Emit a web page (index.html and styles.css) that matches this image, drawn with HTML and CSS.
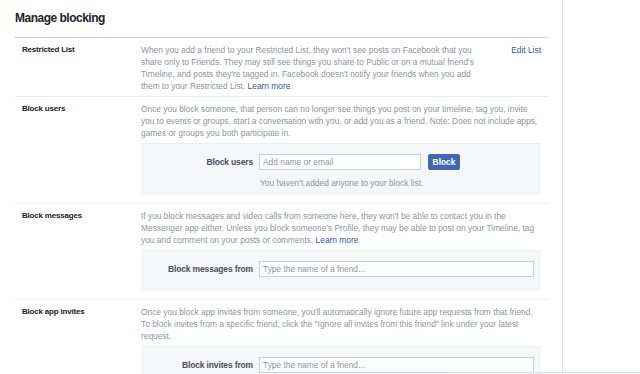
FILE: index.html
```html
<!DOCTYPE html>
<html>
<head>
<meta charset="utf-8">
<link rel="stylesheet" href="styles.css">
</head>
<body>
<div class="page">
  <main class="content">
    <h1 class="title">Manage blocking</h1>
    <div class="rows">
      <section class="row row-first">
        <div class="label">Restricted List</div>
        <div class="body body-narrow">
          <p class="desc">When you add a friend to your Restricted List, they won't see posts on Facebook that you share only to Friends. They may still see things you share to Public or on a mutual friend's Timeline, and posts they're tagged in. Facebook doesn't notify your friends when you add them to your Restricted List. <a class="link" href="#">Learn more</a>.</p>
        </div>
        <a class="action" href="#">Edit List</a>
      </section>
      <section class="row">
        <div class="label">Block users</div>
        <div class="body">
          <p class="desc">Once you block someone, that person can no longer see things you post on your timeline, tag you, invite you to events or groups, start a conversation with you, or add you as a friend. Note: Does not include apps, games or groups you both participate in.</p>
          <div class="box box-users">
            <div class="field">
              <span class="field-label">Block users</span>
              <input class="input input-short" type="text" placeholder="Add name or email">
              <button class="btn" type="button">Block</button>
            </div>
            <div class="hint">You haven't added anyone to your block list.</div>
          </div>
        </div>
      </section>
      <section class="row">
        <div class="label">Block messages</div>
        <div class="body">
          <p class="desc">If you block messages and video calls from someone here, they won't be able to contact you in the Messenger app either. Unless you block someone's Profile, they may be able to post on your Timeline, tag you and comment on your posts or comments. <a class="link" href="#">Learn more</a>.</p>
          <div class="box">
            <div class="field">
              <span class="field-label">Block messages from</span>
              <input class="input input-long" type="text" placeholder="Type the name of a friend...">
            </div>
          </div>
        </div>
      </section>
      <section class="row">
        <div class="label">Block app invites</div>
        <div class="body">
          <p class="desc">Once you block app invites from someone, you'll automatically ignore future app requests from that friend. To block invites from a specific friend, click the "Ignore all invites from this friend" link under your latest request.</p>
          <div class="box">
            <div class="field">
              <span class="field-label">Block invites from</span>
              <input class="input input-long" type="text" placeholder="Type the name of a friend...">
            </div>
          </div>
        </div>
      </section>
    </div>
  </main>
  <div class="dock"></div>
</div>
</body>
</html>
```

FILE: styles.css
```css
* { box-sizing: border-box; }
html, body { margin: 0; padding: 0; background: #fff; }
body {
  font-family: "Liberation Sans", Arial, Helvetica, sans-serif;
  color: #1d2129;
  overflow: hidden;
  height: 374px;
}
.page {
  position: relative;
  height: 374px;
  width: 640px;
  overflow: hidden;
}
.content {
  width: 563px;
  height: 374px;
  border-right: 1px solid #dddfe2;
  padding: 0 14px 0 15px;
  overflow: hidden;
}
.title {
  margin: 0;
  font-size: 12px;
  letter-spacing: -0.5px;
  font-weight: bold;
  line-height: 15px;
  padding: 11px 0 11px;
  border-bottom: 1px solid #c9ccd1;
  color: #1d2129;
}
.row {
  display: flex;
  padding: 6px 7px 5px;
  border-bottom: 1px solid #e9ebee;
}
.row-first { padding-bottom: 4px; }
.label {
  width: 119px;
  flex: none;
  font-size: 8px;
  letter-spacing: -0.2px;
  font-weight: bold;
  line-height: 12px;
}
.body { flex: 1; min-width: 0; }
.body-narrow { padding-right: 26px; }
.desc {
  margin: 0;
  font-size: 8.4px;
  line-height: 12px;
  color: #90949c;
}
.link { color: #365899; text-decoration: none; }
.action {
  flex: none;
  font-size: 8.4px;
  line-height: 12px;
  color: #365899;
  text-decoration: none;
}
.box {
  margin-top: 4px;
  margin-bottom: 3px;
  background: #f6f7f9;
  border-top: 1px solid #eceef1;
  padding: 10px 7px 14px 0;
}
.box-users { padding-bottom: 6px; }
.field {
  display: flex;
  align-items: center;
}
.field-label {
  width: 118px;
  flex: none;
  text-align: right;
  padding-right: 6px;
  font-size: 8.5px;
  letter-spacing: -0.15px;
  font-weight: bold;
  color: #4b4f56;
}
.input {
  height: 16px;
  border: 1px solid #ccd0d5;
  background: #fff;
  padding: 0 3px;
  font-family: inherit;
  font-size: 8.4px;
  color: #1d2129;
  outline: none;
  border-radius: 0;
}
.input::placeholder { color: #90949c; }
.input-short { width: 162px; }
.input-long { width: 278px; }
.btn {
  margin-left: 7px;
  height: 16px;
  width: 32px;
  padding: 0;
  border: 1px solid #4267b2;
  background: #4267b2;
  color: #fff;
  font-family: inherit;
  font-size: 8.4px;
  font-weight: bold;
  border-radius: 2px;
}
.hint {
  margin-top: 7px;
  padding-left: 119px;
  font-size: 8.4px;
  line-height: 12px;
  color: #90949c;
}
.dock {
  position: absolute;
  left: 448px;
  right: 0;
  top: 372px;
  height: 2px;
  border-top: 1px solid #dddfe2;
  background: #f6f7f9;
}
```
